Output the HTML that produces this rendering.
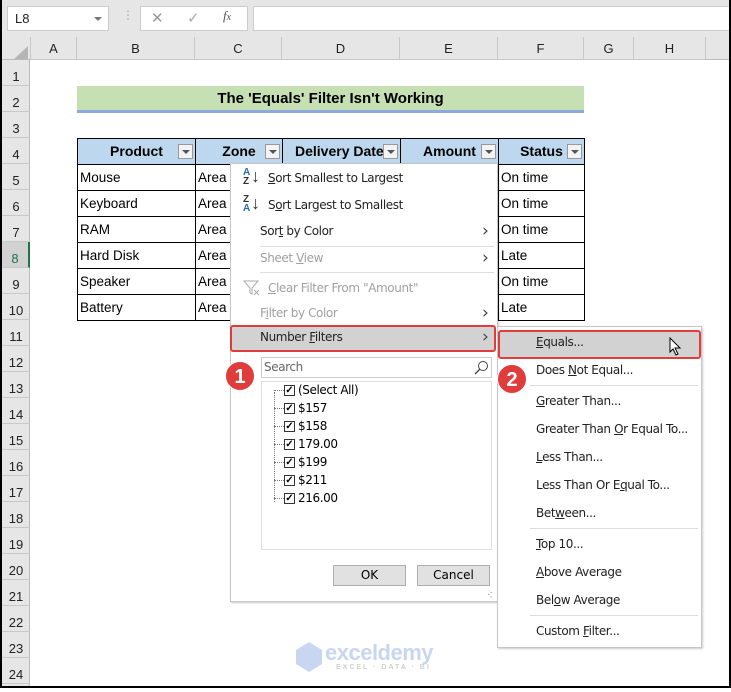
<!DOCTYPE html><html><head><style>
*{margin:0;padding:0;box-sizing:border-box}
body{width:731px;height:688px;position:relative;overflow:hidden;background:#fff;font-family:"Liberation Sans",sans-serif}
.a{position:absolute}
.hdr{background:#e6e6e6;color:#222;font-size:13px;text-align:center;border-right:1px solid #c8c8c8;border-bottom:1px solid #c8c8c8}
.cell{position:absolute;font-size:13.5px;color:#000;border:1px solid #000;padding-left:2px;line-height:25px;background:#fff}
.th{position:absolute;background:#bdd7ee;font-weight:bold;font-size:14px;border:1px solid #000;line-height:25px;text-align:center}
.dd{position:absolute;width:15px;height:15px;border:1px solid #999;background:#f3f3f3;top:5px;right:2px}
.dd:after{content:"";position:absolute;left:3px;top:5px;border-left:4px solid transparent;border-right:4px solid transparent;border-top:4px solid #555}
.mi{position:absolute;font-size:12px;color:#222;font-family:"DejaVu Sans","Liberation Sans",sans-serif;letter-spacing:-0.4px}
.gr{color:#a0a0a0}
.sep{position:absolute;height:1px;background:#ddd}
.arr{position:absolute;font-size:17px;line-height:17px;color:#444;font-family:"DejaVu Sans",sans-serif}
.badge{position:absolute;width:30px;height:30px;border-radius:50%;background:#e03c3c;color:#fff;font-weight:bold;font-size:20px;text-align:center;line-height:30px;border:1px solid #fff}
.cb{position:absolute;width:11px;height:11px;border:1px solid #333;background:#fff;font-size:10px;line-height:9px;text-align:center;font-weight:bold}
.li{position:absolute;font-size:12px;font-family:"DejaVu Sans",sans-serif;letter-spacing:-0.4px}
</style></head><body>
<div class="a" style="left:0;top:0;width:731px;height:37px;background:#e6e6e6"></div>
<div class="a" style="left:7px;top:6px;width:102px;height:25px;background:#fff;border:1px solid #ccc;font-size:13px;padding:4px 0 0 7px;color:#222">L8<span style="position:absolute;right:6px;top:10px;border-left:4px solid transparent;border-right:4px solid transparent;border-top:4px solid #777"></span></div>
<div class="a" style="left:122px;top:8px;color:#aaa;font-size:12px">⋮</div>
<div class="a" style="left:140px;top:6px;width:108px;height:25px;background:#fff;border:1px solid #ccc"></div>
<div class="a" style="left:151px;top:9px;color:#999;font-size:15px">✕</div>
<div class="a" style="left:187px;top:9px;color:#aaa;font-size:15px">✓</div>
<div class="a" style="left:223px;top:8px;color:#555;font-size:13px;font-style:italic;font-family:'Liberation Serif',serif">f<span style="font-size:10px">x</span></div>
<div class="a" style="left:253px;top:6px;width:478px;height:25px;background:#fff;border:1px solid #ccc"></div>
<div class="a" style="left:0;top:37px;width:731px;height:23px;background:#e6e6e6;border-bottom:1px solid #bbb"></div>
<div class="a" style="left:14px;top:46px;border-left:14px solid transparent;border-bottom:13px solid #b5b5b5"></div>
<div class="hdr a" style="left:30px;top:37px;width:47px;height:23px;line-height:23px;border-left:1px solid #c8c8c8">A</div>
<div class="hdr a" style="left:77px;top:37px;width:118px;height:23px;line-height:23px">B</div>
<div class="hdr a" style="left:195px;top:37px;width:87px;height:23px;line-height:23px">C</div>
<div class="hdr a" style="left:282px;top:37px;width:118px;height:23px;line-height:23px">D</div>
<div class="hdr a" style="left:400px;top:37px;width:98px;height:23px;line-height:23px">E</div>
<div class="hdr a" style="left:498px;top:37px;width:86px;height:23px;line-height:23px">F</div>
<div class="hdr a" style="left:584px;top:37px;width:50px;height:23px;line-height:23px">G</div>
<div class="hdr a" style="left:634px;top:37px;width:72px;height:23px;line-height:23px">H</div>
<div class="a" style="left:0;top:60px;width:30px;height:628px;background:#e6e6e6;border-right:1px solid #bbb"></div>
<div class="a" style="left:2px;top:60px;width:28px;font-size:13px;color:#222;text-align:center">
<div style="height:26px;line-height:34px;border-bottom:1px solid #c8c8c8">1</div><div style="height:26px;line-height:34px;border-bottom:1px solid #c8c8c8">2</div><div style="height:26px;line-height:34px;border-bottom:1px solid #c8c8c8">3</div><div style="height:26px;line-height:34px;border-bottom:1px solid #c8c8c8">4</div><div style="height:26px;line-height:34px;border-bottom:1px solid #c8c8c8">5</div><div style="height:26px;line-height:34px;border-bottom:1px solid #c8c8c8">6</div><div style="height:26px;line-height:34px;border-bottom:1px solid #c8c8c8">7</div><div style="height:26px;line-height:34px;border-bottom:1px solid #c8c8c8;color:#217346;background:#d2d2d2;border-right:2px solid #217346">8</div><div style="height:26px;line-height:34px;border-bottom:1px solid #c8c8c8">9</div><div style="height:26px;line-height:34px;border-bottom:1px solid #c8c8c8">10</div><div style="height:26px;line-height:34px;border-bottom:1px solid #c8c8c8">11</div><div style="height:26px;line-height:34px;border-bottom:1px solid #c8c8c8">12</div><div style="height:26px;line-height:34px;border-bottom:1px solid #c8c8c8">13</div><div style="height:26px;line-height:34px;border-bottom:1px solid #c8c8c8">14</div><div style="height:26px;line-height:34px;border-bottom:1px solid #c8c8c8">15</div><div style="height:26px;line-height:34px;border-bottom:1px solid #c8c8c8">16</div><div style="height:26px;line-height:34px;border-bottom:1px solid #c8c8c8">17</div><div style="height:26px;line-height:34px;border-bottom:1px solid #c8c8c8">18</div><div style="height:26px;line-height:34px;border-bottom:1px solid #c8c8c8">19</div><div style="height:26px;line-height:34px;border-bottom:1px solid #c8c8c8">20</div><div style="height:26px;line-height:34px;border-bottom:1px solid #c8c8c8">21</div><div style="height:26px;line-height:34px;border-bottom:1px solid #c8c8c8">22</div><div style="height:26px;line-height:34px;border-bottom:1px solid #c8c8c8">23</div><div style="height:26px;line-height:34px;border-bottom:1px solid #c8c8c8">24</div>
</div>
<div class="a" style="left:77px;top:86px;width:507px;height:27px;background:#c6e0b4;border-bottom:3px solid #8ea9db;text-align:center;font-weight:bold;font-size:15px;line-height:26px">The 'Equals' Filter Isn't Working</div>
<div class="th" style="left:77px;top:138px;width:119px;height:27px">Product<div class="dd"></div></div>
<div class="th" style="left:195px;top:138px;width:88px;height:27px">Zone<div class="dd"></div></div>
<div class="th" style="left:282px;top:138px;width:119px;height:27px;text-align:left;padding-left:12px">Delivery Date<div class="dd"></div></div>
<div class="th" style="left:400px;top:138px;width:99px;height:27px">Amount<div class="dd"></div></div>
<div class="th" style="left:498px;top:138px;width:87px;height:27px">Status<div class="dd"></div></div>
<div class="cell" style="left:77px;top:164px;width:119px;height:27px">Mouse</div>
<div class="cell" style="left:77px;top:190px;width:119px;height:27px">Keyboard</div>
<div class="cell" style="left:77px;top:216px;width:119px;height:27px">RAM</div>
<div class="cell" style="left:77px;top:242px;width:119px;height:27px">Hard Disk</div>
<div class="cell" style="left:77px;top:268px;width:119px;height:27px">Speaker</div>
<div class="cell" style="left:77px;top:294px;width:119px;height:27px">Battery</div>
<div class="cell" style="left:195px;top:164px;width:40px;height:27px">Area</div>
<div class="cell" style="left:195px;top:190px;width:40px;height:27px">Area</div>
<div class="cell" style="left:195px;top:216px;width:40px;height:27px">Area</div>
<div class="cell" style="left:195px;top:242px;width:40px;height:27px">Area</div>
<div class="cell" style="left:195px;top:268px;width:40px;height:27px">Area</div>
<div class="cell" style="left:195px;top:294px;width:40px;height:27px">Area</div>
<div class="cell" style="left:498px;top:164px;width:87px;height:27px">On time</div>
<div class="cell" style="left:498px;top:190px;width:87px;height:27px">On time</div>
<div class="cell" style="left:498px;top:216px;width:87px;height:27px">On time</div>
<div class="cell" style="left:498px;top:242px;width:87px;height:27px">Late</div>
<div class="cell" style="left:498px;top:268px;width:87px;height:27px">On time</div>
<div class="cell" style="left:498px;top:294px;width:87px;height:27px">Late</div>
<div class="a" style="left:230px;top:163px;width:268px;height:439px;background:#fff;border:1px solid #c6c6c6;box-shadow:1px 1px 2px rgba(0,0,0,.2)"></div>
<div class="a" style="left:243px;top:168px;font-size:10px;line-height:9px;color:#2b6cb0;font-weight:bold">A<br><span style="color:#333">Z</span></div>
<div class="a" style="left:251px;top:166px;font-size:18px;color:#333">↓</div>
<div class="a" style="left:243px;top:195px;font-size:10px;line-height:9px;color:#333;font-weight:bold">Z<br><span style="color:#2b6cb0">A</span></div>
<div class="a" style="left:251px;top:193px;font-size:18px;color:#333">↓</div>
<div class="mi" style="left:268px;top:171px"><u>S</u>ort Smallest to Largest</div>
<div class="mi" style="left:268px;top:198px">S<u>o</u>rt Largest to Smallest</div>
<div class="mi" style="left:260px;top:224px">Sor<u>t</u> by Color</div><div class="arr" style="left:482px;top:223px">›</div>
<div class="sep" style="left:260px;top:246px;width:234px"></div>
<div class="mi gr" style="left:260px;top:251px">Sheet <u>V</u>iew</div><div class="arr gr" style="left:482px;top:250px">›</div>
<div class="sep" style="left:260px;top:272px;width:234px"></div>
<svg class="a" style="left:243px;top:280px" width="18" height="16"><path d="M1 1h14l-6 7v6l-2-1v-5z" fill="none" stroke="#aaa"/><path d="M11 10l5 5M16 10l-5 5" stroke="#aaa"/></svg>
<div class="mi gr" style="left:268px;top:281px"><u>C</u>lear Filter From "Amount"</div>
<div class="mi gr" style="left:260px;top:306px">F<u>i</u>lter by Color</div><div class="arr gr" style="left:482px;top:305px">›</div>
<div class="a" style="left:230px;top:325px;width:266px;height:27px;background:#d2d2d2;border:2px solid #e03c3c;border-radius:3px"></div>
<div class="mi" style="left:260px;top:330px">Number <u>F</u>ilters</div><div class="arr" style="left:482px;top:329px">›</div>
<div class="a" style="left:261px;top:357px;width:231px;height:21px;border:1px solid #ccc;font-size:12px;color:#666;padding:2px 2px;font-family:'DejaVu Sans',sans-serif;letter-spacing:-0.4px">Search</div>
<svg class="a" style="left:473px;top:360px" width="16" height="16"><circle cx="10" cy="6" r="4.5" fill="none" stroke="#444"/><path d="M7 9l-5 5" stroke="#444" stroke-width="1.3"/></svg>
<div class="a" style="left:261px;top:381px;width:231px;height:169px;border:1px solid #ddd"></div>
<div class="a" style="left:274px;top:392px;width:1px;height:110px;border-left:1px dotted #777"></div>
<div class="a" style="left:274px;top:390px;width:10px;border-top:1px dotted #777"></div><div class="cb" style="left:284px;top:385px">✓</div><div class="li" style="left:298px;top:383px">(Select All)</div>
<div class="a" style="left:274px;top:408px;width:10px;border-top:1px dotted #777"></div><div class="cb" style="left:284px;top:403px">✓</div><div class="li" style="left:298px;top:401px">$157</div>
<div class="a" style="left:274px;top:426px;width:10px;border-top:1px dotted #777"></div><div class="cb" style="left:284px;top:421px">✓</div><div class="li" style="left:298px;top:419px">$158</div>
<div class="a" style="left:274px;top:444px;width:10px;border-top:1px dotted #777"></div><div class="cb" style="left:284px;top:439px">✓</div><div class="li" style="left:298px;top:437px">179.00</div>
<div class="a" style="left:274px;top:462px;width:10px;border-top:1px dotted #777"></div><div class="cb" style="left:284px;top:457px">✓</div><div class="li" style="left:298px;top:455px">$199</div>
<div class="a" style="left:274px;top:480px;width:10px;border-top:1px dotted #777"></div><div class="cb" style="left:284px;top:475px">✓</div><div class="li" style="left:298px;top:473px">$211</div>
<div class="a" style="left:274px;top:498px;width:10px;border-top:1px dotted #777"></div><div class="cb" style="left:284px;top:493px">✓</div><div class="li" style="left:298px;top:491px">216.00</div>
<div class="a" style="left:333px;top:565px;width:73px;height:21px;background:#e1e1e1;border:1px solid #adadad;font-size:12px;text-align:center;line-height:19px;font-family:'DejaVu Sans',sans-serif">OK</div>
<div class="a" style="left:417px;top:565px;width:73px;height:21px;background:#e1e1e1;border:1px solid #adadad;font-size:12px;text-align:center;line-height:19px;font-family:'DejaVu Sans',sans-serif">Cancel</div>
<div class="a" style="left:487px;top:591px;font-size:8px;color:#999">⠪</div>
<div class="a" style="left:497px;top:326px;width:205px;height:322px;background:#fff;border:1px solid #c6c6c6;box-shadow:1px 1px 2px rgba(0,0,0,.2)"></div>
<div class="a" style="left:498px;top:330px;width:203px;height:29px;background:#d2d2d2;border:2px solid #e03c3c;border-radius:3px"></div>
<div class="mi" style="left:536px;top:335px"><u>E</u>quals...</div>
<svg class="a" style="left:669px;top:337px" width="14" height="20"><path d="M1 1v14l3-3 3 6 2-1-3-6h5z" fill="#fff" stroke="#000"/></svg>
<div class="mi" style="left:536px;top:363px">Does <u>N</u>ot Equal...</div>
<div class="sep" style="left:530px;top:385px;width:168px"></div>
<div class="mi" style="left:536px;top:394px"><u>G</u>reater Than...</div>
<div class="mi" style="left:536px;top:422px">Greater Than <u>O</u>r Equal To...</div>
<div class="mi" style="left:536px;top:450px"><u>L</u>ess Than...</div>
<div class="mi" style="left:536px;top:478px">Less Than Or E<u>q</u>ual To...</div>
<div class="mi" style="left:536px;top:506px">Bet<u>w</u>een...</div>
<div class="sep" style="left:530px;top:528px;width:168px"></div>
<div class="mi" style="left:536px;top:537px"><u>T</u>op 10...</div>
<div class="mi" style="left:536px;top:565px"><u>A</u>bove Average</div>
<div class="mi" style="left:536px;top:593px">Bel<u>o</u>w Average</div>
<div class="sep" style="left:530px;top:615px;width:168px"></div>
<div class="mi" style="left:536px;top:624px">Custom <u>F</u>ilter...</div>
<div class="badge" style="left:225px;top:361px">1</div>
<div class="badge" style="left:497px;top:364px">2</div>
<svg class="a" style="left:294px;top:641px" width="30" height="32"><path d="M15 1l13 8v14l-13 8-13-8V9z" fill="#c9d6f2"/></svg>
<div class="a" style="left:325px;top:640px;font-size:22px;font-weight:bold;color:#c9d6f2;letter-spacing:-0.5px">exceldemy</div>
<div class="a" style="left:336px;top:664px;font-size:7px;color:#d0d0d0;letter-spacing:2px;font-weight:bold">EXCEL · DATA · BI</div>
<div class="a" style="left:0;top:0;width:2px;height:688px;background:#000"></div>
<div class="a" style="left:729px;top:0;width:2px;height:688px;background:#000"></div>
<div class="a" style="left:0;top:686px;width:731px;height:2px;background:#000"></div>
</body></html>
